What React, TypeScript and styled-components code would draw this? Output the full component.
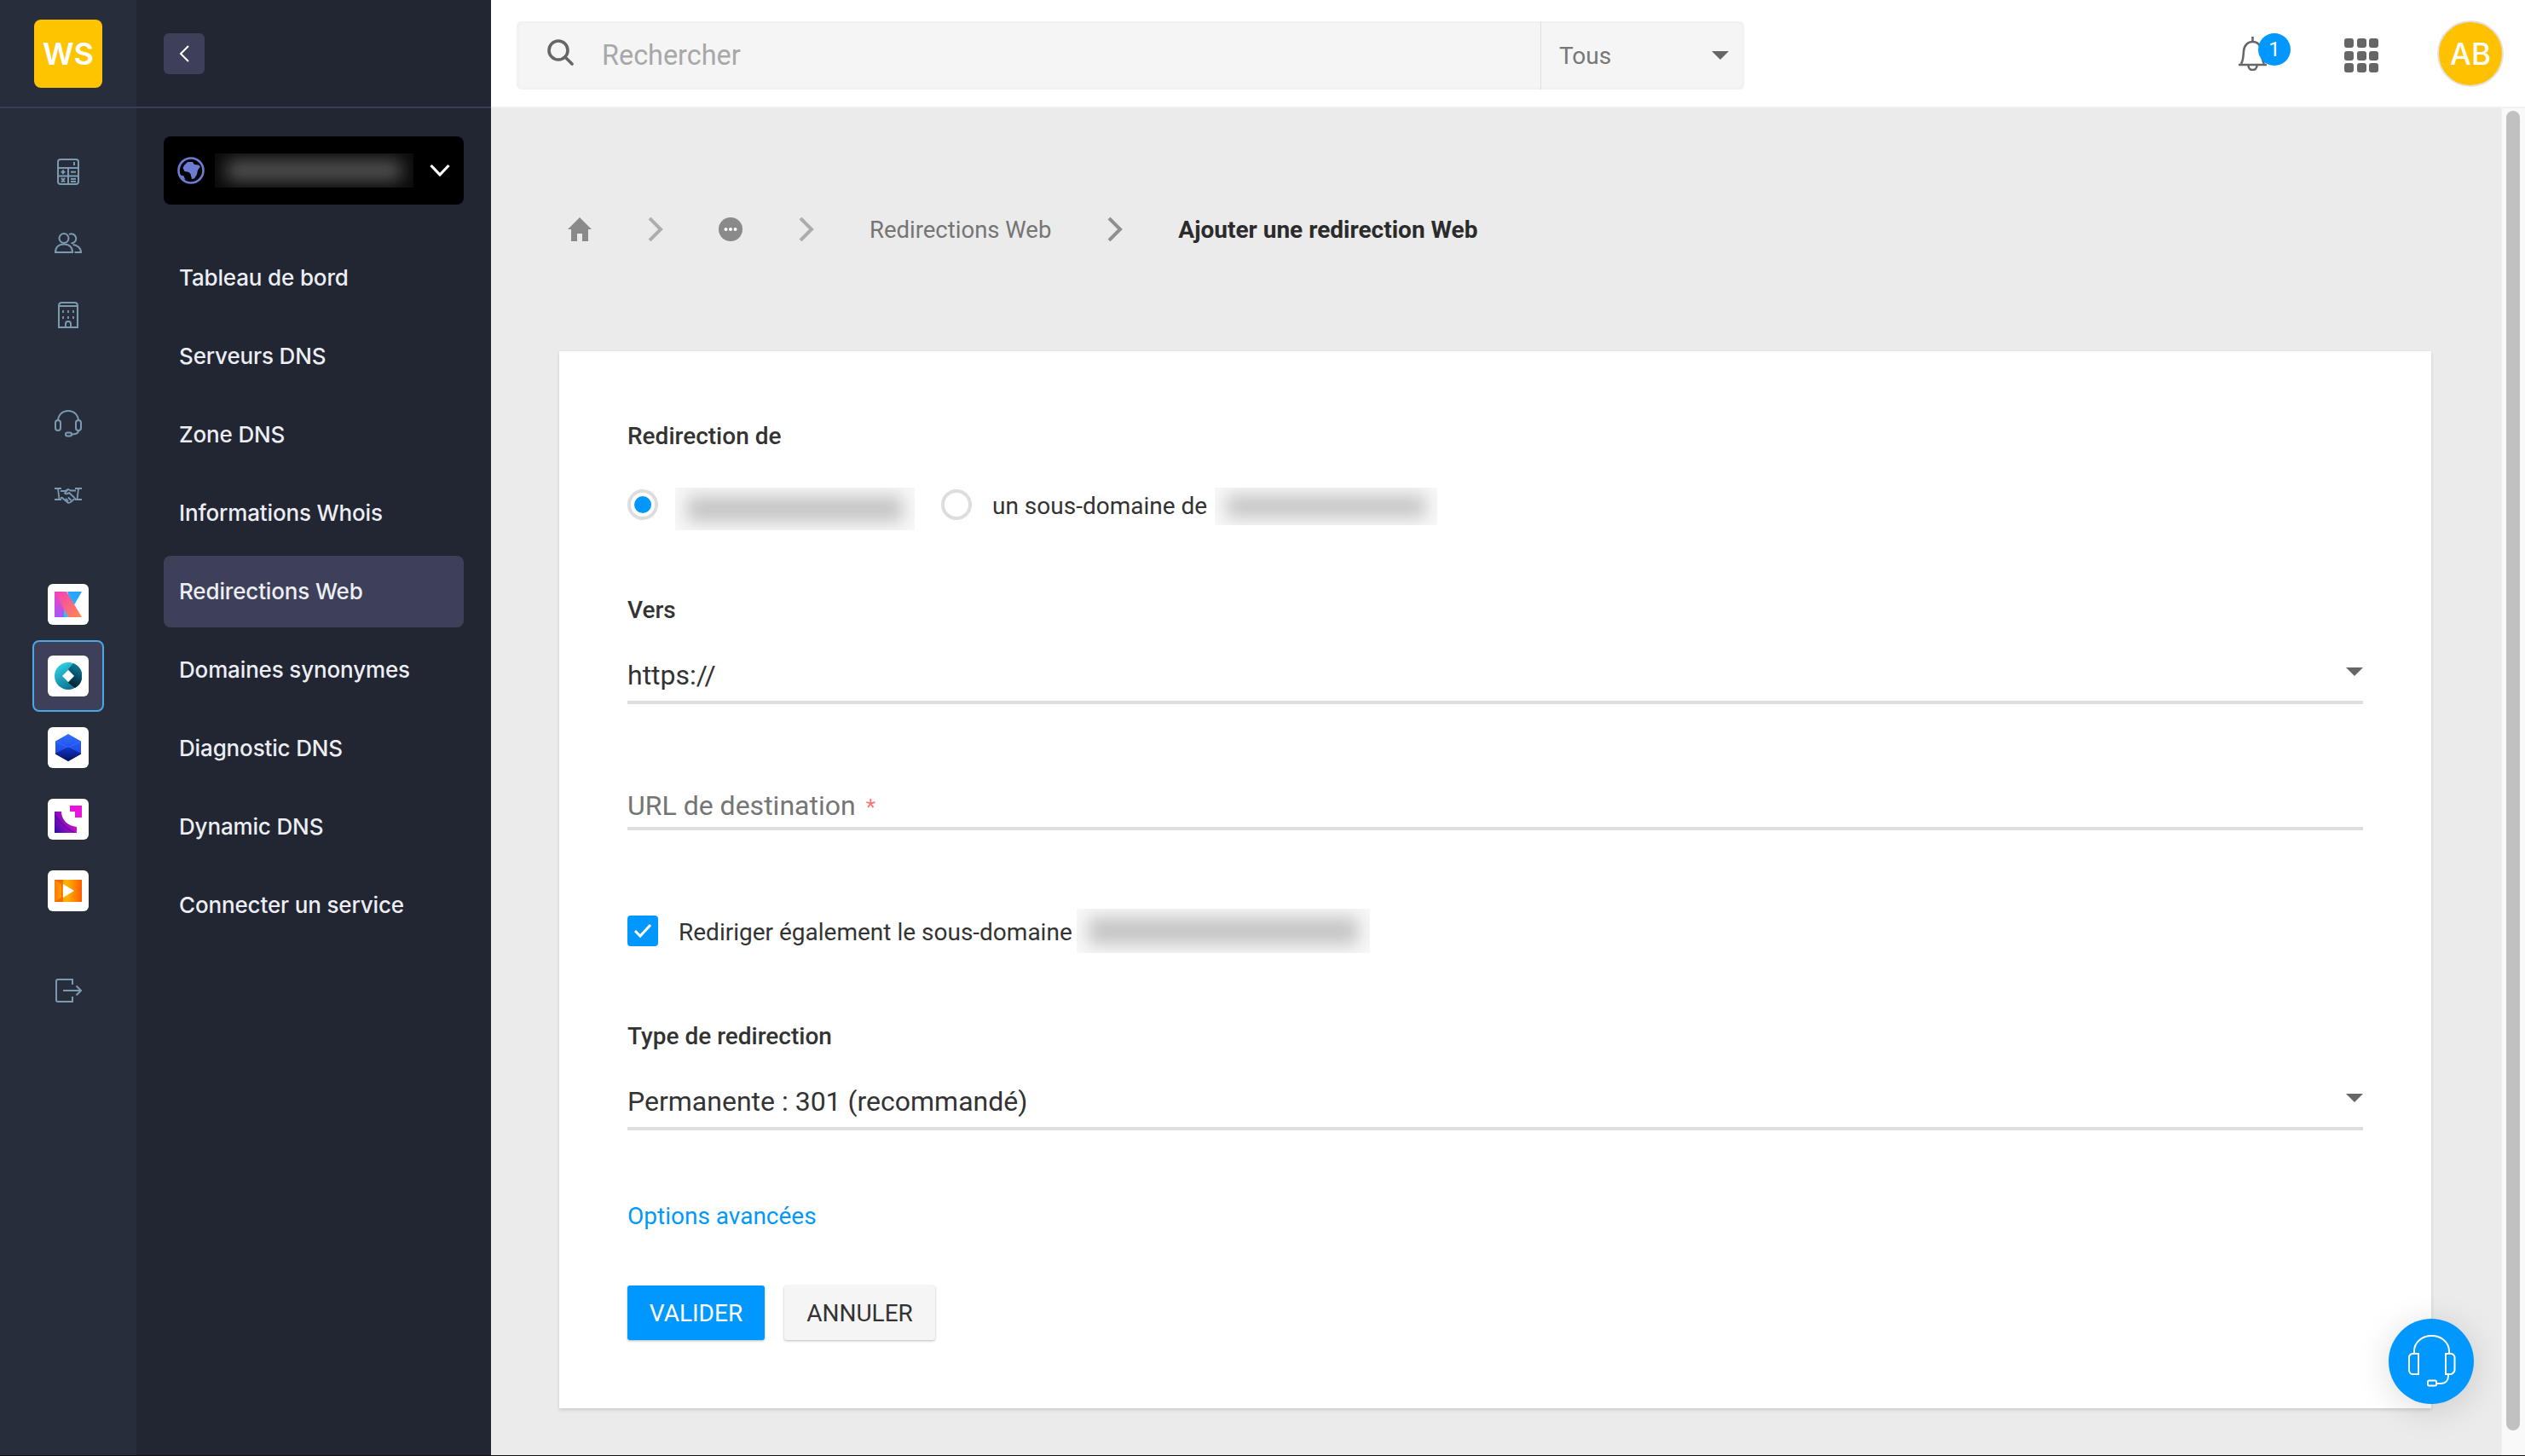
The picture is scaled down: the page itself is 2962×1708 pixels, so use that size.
import styled, { createGlobalStyle } from 'styled-components';

const GlobalStyle = createGlobalStyle`
  html, body {
    margin: 0;
    padding: 0;
    background: #ebebeb;
  }
  * {
    box-sizing: border-box;
  }
`;

const Shell = styled.div`
  display: flex;
  width: 2962px;
  height: 1708px;
  overflow: hidden;
  border-bottom: 1px solid #111;
  font-family: 'Roboto', sans-serif;
  color: #333;
`;

const Rail = styled.aside`
  width: 160px;
  flex: none;
  background: #282d3c;
  display: flex;
  flex-direction: column;
  align-items: center;
`;

const RailHead = styled.div`
  width: 100%;
  height: 127px;
  flex: none;
  display: flex;
  align-items: center;
  justify-content: center;
  border-bottom: 2px solid #3b3d57;
  margin-bottom: 32px;
`;

const Logo = styled.div`
  width: 80px;
  height: 80px;
  border-radius: 8px;
  background: #ffc400;
  color: #fff;
  font-family: 'Inter', sans-serif;
  font-weight: 600;
  font-size: 36px;
  display: flex;
  align-items: center;
  justify-content: center;
`;

const RailGroup = styled.div<{ $top?: number }>`
  display: flex;
  flex-direction: column;
  margin-top: ${(p) => p.$top ?? 0}px;
`;

const RailCell = styled.div<{ $active?: boolean }>`
  width: 84px;
  height: 84px;
  display: flex;
  align-items: center;
  justify-content: center;
  border-radius: 8px;
  color: #7b9ab0;
  background: ${(p) => (p.$active ? '#3e4059' : 'transparent')};
  border: ${(p) => (p.$active ? '2px solid #4aa8e6' : 'none')};
`;

const AppTile = styled.div`
  width: 48px;
  height: 48px;
  border-radius: 6px;
  background: #fff;
  display: flex;
  align-items: center;
  justify-content: center;
`;

const Panel = styled.nav`
  width: 416px;
  flex: none;
  background: #222532;
  display: flex;
  flex-direction: column;
`;

const PanelHead = styled.div`
  height: 127px;
  flex: none;
  display: flex;
  align-items: center;
  padding-left: 32px;
  border-bottom: 2px solid #3b3d57;
  margin-bottom: 33px;
`;

const BackButton = styled.button`
  width: 48px;
  height: 48px;
  border: 0;
  border-radius: 6px;
  background: #3e4059;
  color: #fff;
  display: flex;
  align-items: center;
  justify-content: center;
  padding: 0;
`;

const DomainPicker = styled.div`
  margin: 0 32px 44px;
  height: 80px;
  flex: none;
  border-radius: 8px;
  background: #000;
  color: #fff;
  display: flex;
  align-items: center;
  padding: 0 16px;
`;

const BlurBox = styled.div<{ $w: number; $h: number; $bg: string; $ml?: number; $mr?: number }>`
  width: ${(p) => p.$w}px;
  height: ${(p) => p.$h}px;
  flex: none;
  margin-left: ${(p) => p.$ml ?? 0}px;
  margin-right: ${(p) => p.$mr ?? 0}px;
  background: ${(p) => p.$bg};
  overflow: hidden;
  display: flex;
  align-items: center;
  justify-content: center;
`;

const BlurInk = styled.div<{ $ink: string }>`
  width: calc(100% - 28px);
  height: 60%;
  background: ${(p) => p.$ink};
  filter: blur(10px);
`;

const NavList = styled.div`
  display: flex;
  flex-direction: column;
  gap: 8px;
  margin: 0 32px;
`;

const NavItem = styled.div<{ $active?: boolean }>`
  height: 84px;
  padding: 0 0 2px 18px;
  border-radius: 8px;
  display: flex;
  align-items: center;
  font-family: 'Inter', sans-serif;
  font-size: 26px;
  letter-spacing: -0.15px;
  font-weight: 500;
  color: #eceef4;
  background: ${(p) => (p.$active ? '#3e4059' : 'transparent')};
`;

const Main = styled.main`
  flex: 1;
  min-width: 0;
  position: relative;
  display: flex;
  flex-direction: column;
`;

const TopBar = styled.header`
  height: 127px;
  flex: none;
  background: #fff;
  display: flex;
  align-items: center;
  padding: 0 25px 0 30px;
  border-bottom: 2px solid #f1f1f1;
`;

const SearchBox = styled.div`
  width: 1440px;
  height: 80px;
  margin-top: 5px;
  display: flex;
  align-items: stretch;
  background: #f5f5f5;
  border-radius: 6px;
  box-shadow: inset 0 0 6px rgba(0, 0, 0, 0.04);
`;

const SearchField = styled.div`
  flex: 1;
  display: flex;
  align-items: center;
  padding-left: 36px;
  gap: 33px;
  color: #666;
  font-size: 32.4px;
  svg {
    margin-bottom: 7px;
  }
`;

const Placeholder = styled.span`
  color: #a8a8a8;
`;

const ScopeSelect = styled.div`
  width: 239px;
  flex: none;
  border-left: 1px solid #e0e0e0;
  display: flex;
  align-items: center;
  justify-content: space-between;
  padding: 0 18px 0 21px;
  color: #777;
  font-size: 28px;
`;

const Caret = styled.span<{ $lift?: number }>`
  width: 0;
  height: 0;
  flex: none;
  border-left: 10px solid transparent;
  border-right: 10px solid transparent;
  border-top: 10px solid #666;
  margin-bottom: ${(p) => p.$lift ?? 0}px;
`;

const TopActions = styled.div`
  margin-left: auto;
  display: flex;
  align-items: center;
`;

const BellWrap = styled.div`
  position: relative;
  width: 33px;
  height: 40px;
  color: #666;
  margin-right: 91px;
`;

const Badge = styled.span`
  position: absolute;
  left: 23px;
  top: -4px;
  width: 38px;
  height: 38px;
  border-radius: 50%;
  background: #0098ff;
  color: #fff;
  font-size: 24px;
  display: flex;
  align-items: center;
  justify-content: center;
`;

const AppsGrid = styled.div`
  display: grid;
  grid-template-columns: repeat(3, 11px);
  grid-auto-rows: 11px;
  gap: 3.5px;
  margin: 5px 69px 0 0;
`;

const AppsDot = styled.span`
  background: #666;
  border-radius: 3px;
`;

const Avatar = styled.div`
  width: 78px;
  height: 78px;
  border-radius: 50%;
  background: #ffc100;
  border: 2px solid #e2e2e2;
  color: #fff;
  font-family: 'Inter', sans-serif;
  font-weight: 500;
  font-size: 35px;
  display: flex;
  align-items: center;
  justify-content: center;
`;

const Body = styled.div`
  flex: 1;
  min-height: 0;
  display: flex;
  background: #ebebeb;
`;

const Content = styled.div`
  flex: 1;
  padding: 0 82px 0 80px;
`;

const Crumbs = styled.div`
  height: 56px;
  margin-top: 114px;
  margin-bottom: 115px;
  padding-left: 10px;
  display: flex;
  align-items: center;
  gap: 65.5px;
`;

const CrumbLink = styled.span`
  font-size: 27.5px;
  color: #757575;
`;

const CrumbCurrent = styled.span`
  font-size: 28px;
  font-weight: 700;
  color: #2b2b2b;
`;

const Card = styled.section`
  height: 1240px;
  background: #fff;
  padding: 80px 80px 0;
  box-shadow: 0 2px 4px rgba(0, 0, 0, 0.14);
`;

const Label = styled.div<{ $top?: number }>`
  font-size: 28px;
  font-weight: 500;
  line-height: 40px;
  color: #333;
  margin-top: ${(p) => p.$top ?? 0}px;
`;

const RadioRow = styled.div`
  display: flex;
  align-items: flex-start;
  height: 44px;
  margin-top: 40px;
  font-size: 28px;
  line-height: 44px;
`;

const Radio = styled.span<{ $on?: boolean }>`
  width: 36px;
  height: 36px;
  flex: none;
  margin-top: 2px;
  border-radius: 50%;
  border: 4px solid #ddd;
  display: flex;
  align-items: center;
  justify-content: center;
  &::after {
    content: '';
    width: 20px;
    height: 20px;
    border-radius: 50%;
    background: ${(p) => (p.$on ? '#0098ff' : 'transparent')};
  }
`;

const RadioText = styled.span`
  margin: 0 9px 0 24px;
  color: #333;
`;

const SelectLine = styled.div<{ $top: number; $pad: number }>`
  display: flex;
  align-items: center;
  justify-content: space-between;
  margin-top: ${(p) => p.$top}px;
  padding-bottom: ${(p) => p.$pad}px;
  border-bottom: 4px solid #dedede;
  font-size: 32px;
  line-height: 44px;
  color: #333;
`;

const Placeholder2 = styled.span`
  color: #757575;
`;

const Required = styled.span`
  color: #f77;
  font-size: 26px;
  line-height: 0;
  margin-left: 12px;
`;

const CheckRow = styled.div`
  display: flex;
  align-items: center;
  height: 52px;
  margin-top: 92px;
  font-size: 28px;
`;

const CheckBox = styled.span`
  width: 36px;
  height: 36px;
  flex: none;
  border-radius: 4px;
  background: #0098ff;
  color: #fff;
  display: flex;
  align-items: center;
  justify-content: center;
`;

const CheckText = styled.span`
  margin: 3px 5px 0 24px;
`;

const AdvancedLink = styled.a`
  display: block;
  margin-top: 81px;
  font-size: 28px;
  line-height: 40px;
  color: #0098ff;
`;

const Buttons = styled.div`
  display: flex;
  gap: 23px;
  margin-top: 61px;
`;

const Btn = styled.button<{ $primary?: boolean }>`
  height: 64px;
  width: ${(p) => (p.$primary ? 161 : 177)}px;
  border: 0;
  border-radius: 3px;
  padding: 0;
  font-family: inherit;
  font-size: 28px;
  color: ${(p) => (p.$primary ? '#fff' : '#333')};
  background: ${(p) => (p.$primary ? '#0098ff' : '#f5f5f5')};
  box-shadow: 0 1px 3px rgba(0, 0, 0, 0.28);
`;

const ScrollTrack = styled.div`
  width: 28px;
  flex: none;
  background: #f9f9f9;
  border-left: 1px solid #efefef;
  padding: 3px 6px 0 5px;
`;

const ScrollThumb = styled.div`
  height: 1548px;
  border-radius: 8px;
  background: #c1c1c1;
`;

const HelpFab = styled.button`
  position: absolute;
  right: 60px;
  bottom: 60px;
  width: 100px;
  height: 100px;
  border: 0;
  padding: 0;
  border-radius: 50%;
  background: #0098ff;
  color: #fff;
  box-shadow: 0 6px 40px rgba(0, 0, 0, 0.14);
`;

const CalcIcon = () => (
  <svg width="26" height="31" viewBox="0 0 26 31" fill="none" stroke="currentColor" strokeWidth="2">
    <rect x="1" y="1" width="24" height="29" rx="3" />
    <path d="M1 11h24M1 20.5h24M13 11v19M20 4v4" />
    <path d="M4.5 15.7h5M7 13.2v5M16 15.7h6M16 24h6M16 27h6M5 23l4 4.5M9 23l-4 4.5" />
  </svg>
);

const PeopleIcon = () => (
  <svg width="32" height="24" viewBox="0 0 32 24" fill="none" stroke="currentColor" strokeWidth="2">
    <circle cx="11" cy="6.5" r="5.5" />
    <path d="M1 23c0-6 4-9.500 10-9.500S21 17 21 23z" />
    <path d="M17 2a5.500 5.500 0 1 1 2.500 10.300" />
    <path d="M21.500 14c5 .5 9.500 4 9.500 9h-7.500" />
  </svg>
);

const BuildingIcon = () => (
  <svg width="24" height="31" viewBox="0 0 24 31" fill="none" stroke="currentColor" strokeWidth="2">
    <path d="M1 30V4.500C1 2.500 2.500 1 4.500 1h15C21.500 1 23 2.500 23 4.500V30z" />
    <path d="M1 5h22" />
    <path d="M6 10v3M12 10v3M18 10v3M6 17v3M12 17v3M18 17v3" strokeWidth="1.800" />
    <path d="M9 30v-4a3 3 0 0 1 6 0v4" />
  </svg>
);

const HeadsetIcon = () => (
  <svg width="32" height="32" viewBox="0 0 32 32" fill="none" stroke="currentColor" strokeWidth="2">
    <path d="M4 13C4 6 9 1 16 1s12 5 12 12" />
    <rect x="1" y="12" width="6" height="12" rx="3" />
    <rect x="25" y="12" width="6" height="12" rx="3" />
    <path d="M28 24c0 3-3 4.500-8 4.500" />
    <rect x="13" y="26.500" width="7" height="4" rx="2" />
  </svg>
);

const HandshakeIcon = () => (
  <svg width="32" height="20" viewBox="0 0 32 20" fill="none" stroke="currentColor" strokeWidth="1.800">
    <path d="M0 2h8M0 15h8M4 2l1.500 13M24 2h8M24 15h8M28 2l-1.500 13" />
    <path d="M7 5h5l4-2 3 1.500h6M7 13h2l7 6 3-1 4-3.500 2-1" />
    <path d="M16 3l-4 4.500c1.500 1.500 3 1 5-.5l6.500 6M13 14l3 3M16 12.500l3.500 3.500" />
  </svg>
);

const LogoutIcon = () => (
  <svg width="31" height="28" viewBox="0 0 31 28" fill="none" stroke="currentColor" strokeWidth="2">
    <path d="M20 7V1H3a2 2 0 0 0-2 2v22a2 2 0 0 0 2 2h17v-6" />
    <path d="M9 14h21M24.500 8.500L30 14l-5.500 5.500" />
  </svg>
);

const KLogo = () => (
  <svg width="32" height="32" viewBox="0 0 32 32">
    <defs>
      <linearGradient id="kStem" x1="0" y1="0" x2="0" y2="1">
        <stop offset="0" stopColor="#f044c4" />
        <stop offset="1" stopColor="#a855f7" />
      </linearGradient>
      <linearGradient id="kBand" x1="0" y1="0" x2="1" y2="1">
        <stop offset="0" stopColor="#f23cc0" />
        <stop offset="1" stopColor="#ff8a4c" />
      </linearGradient>
      <linearGradient id="kBlue" x1="1" y1="0" x2="0" y2="1">
        <stop offset="0" stopColor="#2a9dff" />
        <stop offset="1" stopColor="#1fb6ff" />
      </linearGradient>
    </defs>
    <path d="M0 1h12v30H0z" fill="url(#kStem)" />
    <path d="M11 18l5 13h-5z" fill="#22c8f0" />
    <path d="M15 1h17L21 20z" fill="url(#kBlue)" />
    <path d="M0 1h14l18 30H16z" fill="url(#kBand)" />
  </svg>
);

const LensLogo = () => (
  <svg width="32" height="32" viewBox="0 0 32 32">
    <defs>
      <linearGradient id="lensA" x1="0" y1="0" x2="0.6" y2="1">
        <stop offset="0" stopColor="#34def0" />
        <stop offset="1" stopColor="#0a6f8e" />
      </linearGradient>
      <linearGradient id="lensB" x1="0.8" y1="0" x2="0.5" y2="1">
        <stop offset="0" stopColor="#0f86a6" />
        <stop offset="1" stopColor="#021f2c" />
      </linearGradient>
    </defs>
    <circle cx="16" cy="16" r="16" fill="url(#lensA)" />
    <path d="M16 8l6 -7A16 16 0 0 1 24 30L16 24l7-8z" fill="url(#lensB)" />
    <path d="M16 9l7 7-7 7-7-7z" fill="#fff" />
  </svg>
);

const HexLogo = () => (
  <svg width="32" height="32" viewBox="0 0 32 32">
    <defs>
      <linearGradient id="hexTop" x1="0" y1="0" x2="0" y2="1">
        <stop offset="0" stopColor="#2f6dff" />
        <stop offset="1" stopColor="#1438d8" />
      </linearGradient>
      <linearGradient id="hexBot" x1="0" y1="0" x2="0" y2="1">
        <stop offset="0" stopColor="#1236d4" />
        <stop offset="1" stopColor="#04114f" />
      </linearGradient>
    </defs>
    <path d="M16 0l15 8.500v15L16 32 1 23.500v-15z" fill="url(#hexTop)" />
    <path d="M16 16l15 7.500L16 32 1 23.500z" fill="url(#hexBot)" />
    <path d="M1 8.500L16 16 31 8.500" fill="none" stroke="#3a7cff" strokeWidth=".6" />
    <path d="M1 23.500L16 16l15 7.500" fill="none" stroke="#0b1f8e" strokeWidth=".8" />
  </svg>
);

const CornerLogo = () => (
  <svg width="32" height="32" viewBox="0 0 32 32">
    <defs>
      <linearGradient id="cornerFill" x1="0" y1="1" x2="1" y2="0.4">
        <stop offset="0" stopColor="#2b0aa8" />
        <stop offset="1" stopColor="#f012d0" />
      </linearGradient>
    </defs>
    <path d="M18 0h14v14h-8V7h-6z" fill="#e814dc" />
    <path d="M0 7h8c0 10 8 17 18 18v7H0z" fill="url(#cornerFill)" />
    <path d="M0 11c6 8 12 15 24 21" fill="none" stroke="#3a0a90" strokeWidth=".8" />
  </svg>
);

const PlayLogo = () => (
  <svg width="32" height="26" viewBox="0 0 32 26">
    <defs>
      <linearGradient id="playFill" x1="0" y1="0" x2="1" y2="0">
        <stop offset="0" stopColor="#ff7a00" />
        <stop offset=".45" stopColor="#ffb400" />
        <stop offset="1" stopColor="#ff5c00" />
      </linearGradient>
    </defs>
    <path d="M0 0h32v26H0z" fill="url(#playFill)" />
    <path d="M0 0h10l-1 13 1 13H0l8-5V5z" fill="#f06a00" />
    <path d="M10 5l13 8-13 8z" fill="#fff" />
  </svg>
);

const GlobeIcon = () => (
  <svg width="32" height="32" viewBox="0 0 32 32" style={{ flex: 'none' }}>
    <circle cx="16" cy="16" r="14.500" fill="none" stroke="#6c7cd0" strokeWidth="2.600" />
    <path d="M8 10l4-4h6l2 3 5 .5 2 2-3 4-1 5-3 5-3 .5-1.500-6-2-2-5-1-2-4z" fill="#6c7cd0" />
    <path d="M2.500 21l5 1.500 2 4.500-3-1.500z" fill="#6c7cd0" />
  </svg>
);

const SmallChevronLeft = () => (
  <svg width="12" height="20" viewBox="0 0 12 20" fill="none" stroke="currentColor" strokeWidth="2">
    <path d="M11 1L2 10l9 9" />
  </svg>
);

const ChevronDown = () => (
  <svg width="24" height="16" viewBox="0 0 24 16" fill="none" stroke="currentColor" strokeWidth="3.200">
    <path d="M1.500 2L12 13 22.500 2" />
  </svg>
);

const SearchIcon = () => (
  <svg width="31" height="31" viewBox="0 0 31 31" fill="none" stroke="currentColor" strokeWidth="3.600" style={{ flex: 'none' }}>
    <circle cx="13" cy="13" r="11" />
    <path d="M21 21l8 8" strokeLinecap="round" />
  </svg>
);

const BellIcon = () => (
  <svg width="33" height="40" viewBox="0 0 33 40" fill="none" stroke="currentColor" strokeWidth="2.600">
    <path d="M16.500 0v5" />
    <path d="M3 32c2.500-4 2.500-9 3-15 .5-7 5-11 10.500-11S26.500 10 27 17c.5 6 .5 11 3 15" />
    <path d="M0 33h33" />
    <path d="M11.500 34a5 5 0 0 0 10 0" />
  </svg>
);

const HomeIcon = () => (
  <svg width="28" height="28" viewBox="0 0 28 28" fill="#8a8a8a">
    <path d="M14 0l14 14h-4v14h-7v-9h-6v9H4V14H0z" />
  </svg>
);

const MoreIcon = () => (
  <svg width="28" height="28" viewBox="0 0 28 28">
    <circle cx="14" cy="14" r="14" fill="#8a8a8a" />
    <circle cx="8.500" cy="14" r="2" fill="#fff" />
    <circle cx="14" cy="14" r="2" fill="#fff" />
    <circle cx="19.500" cy="14" r="2" fill="#fff" />
  </svg>
);

const CrumbChevron = ({ dark }: { dark?: boolean }) => (
  <svg width="18" height="28" viewBox="0 0 18 28" fill="none" stroke={dark ? '#8f8f8f' : '#adadad'} strokeWidth="4">
    <path d="M2 1l13 13L2 27" />
  </svg>
);

const FabHeadset = () => (
  <svg width="100" height="100" viewBox="0 0 100 100" fill="none" stroke="currentColor" strokeWidth="2">
    <path d="M30 41v-3c0-10 9-18 20.500-18S71 28 71 38v3" />
    <path d="M30 41h-2c-2 0-4 2-4 4v15c0 3 2 5 4 5h7V41z" />
    <path d="M71 41h2c2 0 4.500 2 4.500 4v15c0 2-2.500 5-4.500 5h-6V41z" />
    <path d="M70 65v2c0 5-3 9-9 9h-6" />
    <rect x="46" y="72.500" width="10" height="6" rx="1.500" />
  </svg>
);

const CheckMark = () => (
  <svg width="22" height="18" viewBox="0 0 22 18" fill="none" stroke="currentColor" strokeWidth="3">
    <path d="M2 9l6 6L20 2" />
  </svg>
);

const navItems = [
  'Tableau de bord',
  'Serveurs DNS',
  'Zone DNS',
  'Informations Whois',
  'Redirections Web',
  'Domaines synonymes',
  'Diagnostic DNS',
  'Dynamic DNS',
  'Connecter un service',
];

const App = () => {
  return (
    <>
      <GlobalStyle />
      <Shell>
        <Rail>
          <RailHead>
            <Logo>WS</Logo>
          </RailHead>
          <RailGroup>
            <RailCell><CalcIcon /></RailCell>
            <RailCell><PeopleIcon /></RailCell>
            <RailCell><BuildingIcon /></RailCell>
          </RailGroup>
          <RailGroup $top={44}>
            <RailCell><HeadsetIcon /></RailCell>
            <RailCell><HandshakeIcon /></RailCell>
          </RailGroup>
          <RailGroup $top={44}>
            <RailCell><AppTile><KLogo /></AppTile></RailCell>
            <RailCell $active><AppTile><LensLogo /></AppTile></RailCell>
            <RailCell><AppTile><HexLogo /></AppTile></RailCell>
            <RailCell><AppTile><CornerLogo /></AppTile></RailCell>
            <RailCell><AppTile><PlayLogo /></AppTile></RailCell>
          </RailGroup>
          <RailGroup $top={33}>
            <RailCell><LogoutIcon /></RailCell>
          </RailGroup>
        </Rail>

        <Panel>
          <PanelHead>
            <BackButton aria-label="Réduire"><SmallChevronLeft /></BackButton>
          </PanelHead>
          <DomainPicker>
            <GlobeIcon />
            <BlurBox $w={233} $h={40} $bg="#0a0a0a" $ml={12} $mr={19}>
              <BlurInk $ink="#555" />
            </BlurBox>
            <ChevronDown />
          </DomainPicker>
          <NavList>
            {navItems.map((item) => (
              <NavItem key={item} $active={item === 'Redirections Web'}>{item}</NavItem>
            ))}
          </NavList>
        </Panel>

        <Main>
          <TopBar>
            <SearchBox>
              <SearchField>
                <SearchIcon />
                <Placeholder>Rechercher</Placeholder>
              </SearchField>
              <ScopeSelect>
                Tous
                <Caret />
              </ScopeSelect>
            </SearchBox>
            <TopActions>
              <BellWrap>
                <BellIcon />
                <Badge>1</Badge>
              </BellWrap>
              <AppsGrid>
                {Array.from({ length: 9 }).map((_, i) => (
                  <AppsDot key={i} />
                ))}
              </AppsGrid>
              <Avatar>AB</Avatar>
            </TopActions>
          </TopBar>

          <Body>
            <Content>
              <Crumbs>
                <HomeIcon />
                <CrumbChevron />
                <MoreIcon />
                <CrumbChevron />
                <CrumbLink>Redirections Web</CrumbLink>
                <CrumbChevron dark />
                <CrumbCurrent>Ajouter une redirection Web</CrumbCurrent>
              </Crumbs>

              <Card>
                <Label>Redirection de</Label>
                <RadioRow>
                  <Radio $on />
                  <BlurBox $w={281} $h={50} $bg="#f8f8f8" $ml={20} $mr={31}>
                    <BlurInk $ink="#c4c4c4" />
                  </BlurBox>
                  <Radio />
                  <RadioText>un sous-domaine de</RadioText>
                  <BlurBox $w={261} $h={44} $bg="#f8f8f8">
                    <BlurInk $ink="#c4c4c4" />
                  </BlurBox>
                </RadioRow>

                <Label $top={80}>Vers</Label>
                <SelectLine $top={34} $pad={8}>
                  https://
                  <Caret $lift={8} />
                </SelectLine>

                <SelectLine $top={97} $pad={3}>
                  <span>
                    <Placeholder2>URL de destination</Placeholder2>
                    <Required>*</Required>
                  </span>
                </SelectLine>

                <CheckRow>
                  <CheckBox><CheckMark /></CheckBox>
                  <CheckText>Rediriger également le sous-domaine</CheckText>
                  <BlurBox $w={344} $h={52} $bg="#f8f8f8">
                    <BlurInk $ink="#c4c4c4" />
                  </BlurBox>
                </CheckRow>

                <Label $top={78}>Type de redirection</Label>
                <SelectLine $top={34} $pad={8}>
                  Permanente : 301 (recommandé)
                  <Caret $lift={8} />
                </SelectLine>

                <AdvancedLink>Options avancées</AdvancedLink>

                <Buttons>
                  <Btn $primary>VALIDER</Btn>
                  <Btn>ANNULER</Btn>
                </Buttons>
              </Card>
            </Content>
            <ScrollTrack>
              <ScrollThumb />
            </ScrollTrack>
          </Body>

          <HelpFab aria-label="Aide"><FabHeadset /></HelpFab>
        </Main>
      </Shell>
    </>
  );
};

export default App;
